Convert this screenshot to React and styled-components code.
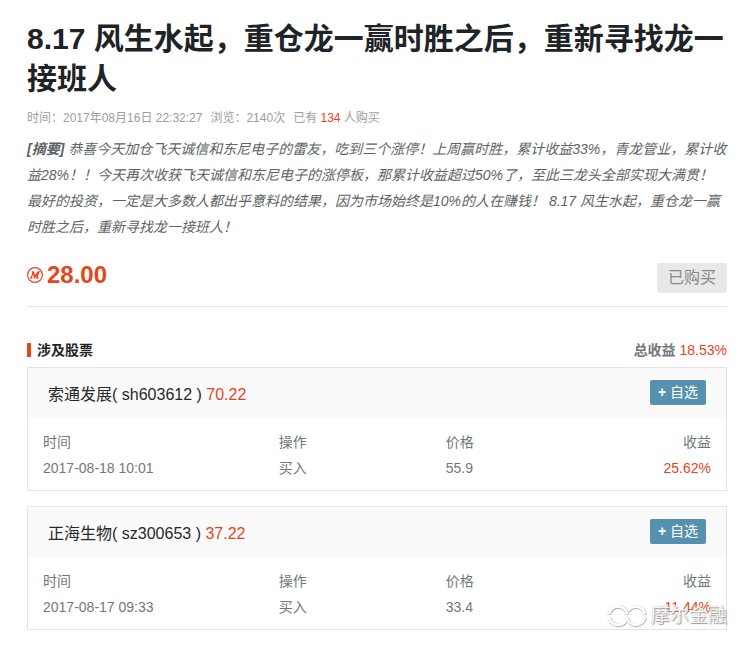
import styled, { createGlobalStyle } from "styled-components";

const GlobalStyle = createGlobalStyle`
  * {
    box-sizing: border-box;
  }

  body {
    margin: 0;
    background: #fff;
    color: #72777b;
    font-family: "Liberation Sans", "Noto Sans CJK SC", sans-serif;
    font-size: 14px;
    text-spacing-trim: space-all;
  }
`;

const Page = styled.main`
  padding: 19px 14px 15px 27px;
`;

const Title = styled.h1`
  margin: 0;
  font-size: 30px;
  line-height: 40px;
  font-weight: 700;
  color: #1d2326;
`;

const Meta = styled.div`
  display: flex;
  gap: 8px;
  margin-top: 9px;
  font-size: 12px;
  line-height: 20px;
  color: #999ea1;
`;

const BuyerCount = styled.span`
  color: #e8441c;
`;

const Summary = styled.p`
  margin: 8px 0 0;
  line-height: 26px;
  font-style: italic;
  color: #5c6366;
`;

const PriceRow = styled.div`
  display: flex;
  justify-content: space-between;
  align-items: flex-end;
  margin-top: 20px;
  padding-bottom: 13px;
  border-bottom: 1px solid #e4e4e4;
`;

const Price = styled.div`
  display: flex;
  align-items: center;
  gap: 4px;
  padding-bottom: 3px;
  font-size: 24px;
  line-height: 30px;
  font-weight: 700;
  color: #e8441c;
`;

const BoughtButton = styled.button`
  height: 30px;
  padding: 0 11px;
  border: 0;
  border-radius: 2px;
  background: #e8e8e8;
  color: #888;
  font-family: inherit;
  font-size: 16px;
  line-height: 30px;
`;

const SectionHead = styled.div`
  display: flex;
  justify-content: space-between;
  align-items: center;
  margin: 33px 0 7px;
  line-height: 20px;
`;

const SectionTitle = styled.h2`
  display: flex;
  align-items: center;
  gap: 6px;
  margin: 0;
  font-size: 14px;
  color: #1d2326;

  &::before {
    content: "";
    width: 4px;
    height: 14px;
    background: #e8441c;
  }
`;

const Up = styled.span`
  color: #e8441c;
`;

const StockList = styled.div`
  display: grid;
  gap: 15px;
  position: relative;
`;

const Card = styled.section`
  border: 1px solid #e4e4e4;
`;

const CardHead = styled.header`
  display: flex;
  justify-content: space-between;
  align-items: center;
  height: 50px;
  padding: 0 20px 1px;
  background: #fafafa;
`;

const StockName = styled.h3`
  margin: 0;
  font-size: 16px;
  font-weight: 400;
  color: #25292c;
`;

const FollowButton = styled.button`
  height: 25px;
  padding: 0 8px;
  border: 0;
  border-radius: 2px;
  background: #5692b0;
  color: #fff;
  font-family: inherit;
  font-size: 14px;
  line-height: 25px;
  cursor: pointer;
`;

const TableWrap = styled.div`
  padding: 11px 15px 9px;
`;

const Table = styled.table`
  width: 100%;
  table-layout: fixed;
  border-collapse: collapse;
  line-height: 26px;
`;

const Cell = styled.td`
  width: ${({ $width }) => $width || "auto"};
  height: 26px;
  padding: 0;
  font-weight: 400;
  text-align: ${({ $right }) => ($right ? "right" : "left")};
  color: ${({ $up }) => ($up ? "#e8441c" : "inherit")};
`;

const Watermark = styled.div`
  position: absolute;
  right: 0;
  bottom: 0;
  display: flex;
  align-items: center;
  gap: 4px;
  font-size: 19px;
  line-height: 26px;
  color: rgba(255, 255, 255, 0.9);
  text-shadow: 1px 1px 1px #999, 0 0 1px #aaa;
  pointer-events: none;
`;

const stocks = [
  {
    name: "索通发展",
    code: "sh603612",
    current: "70.22",
    time: "2017-08-18 10:01",
    action: "买入",
    price: "55.9",
    profit: "25.62%",
  },
  {
    name: "正海生物",
    code: "sz300653",
    current: "37.22",
    time: "2017-08-17 09:33",
    action: "买入",
    price: "33.4",
    profit: "11.44%",
  },
];

const CoinIcon = () => (
  <svg width="16" height="16" viewBox="0 0 16 16" fill="none" stroke="#e8441c">
    <circle cx="8" cy="8" r="7.4" strokeWidth="1.2" />
    <path d="M2.8 11h2.6M4.2 11 6.2 5M5 4.9h1.8" strokeWidth="1.1" />
    <path d="M6.4 5 7.6 10.2 11.2 5 10 11" strokeWidth="1.6" />
    <path d="M10.8 4.9h2.4M8.8 11h2.8" strokeWidth="1.1" />
  </svg>
);

const leftRing = "M1.9 12.3A9.3 9.8 0 0 1 20.2 12.3M1.9 15.2A9.3 9.8 0 0 0 19 18";
const rightRing = "M37.9 15.2A9.3 9.8 0 0 1 19.8 15.2M37.9 12.3A9.3 9.8 0 0 0 21 9";

const RingsIcon = () => (
  <svg width="40" height="28" viewBox="0 0 40 28" fill="none">
    <g stroke="#b4b4b4" strokeWidth="3.8" transform="translate(.4 .5)">
      <path d={leftRing} />
      <path d={rightRing} />
    </g>
    <g stroke="#fff" strokeWidth="2.8">
      <path d={leftRing} />
      <path d={rightRing} />
    </g>
  </svg>
);

const StockCard = ({ stock }) => (
  <Card>
    <CardHead>
      <StockName>
        {stock.name}( {stock.code} ) <Up>{stock.current}</Up>
      </StockName>
      <FollowButton type="button">
        <b>+</b> 自选
      </FollowButton>
    </CardHead>
    <TableWrap>
      <Table>
        <thead>
          <tr>
            <Cell as="th" $width="35.3%">
              时间
            </Cell>
            <Cell as="th" $width="25%">
              操作
            </Cell>
            <Cell as="th">价格</Cell>
            <Cell as="th" $right>
              收益
            </Cell>
          </tr>
        </thead>
        <tbody>
          <tr>
            <Cell>{stock.time}</Cell>
            <Cell>{stock.action}</Cell>
            <Cell>{stock.price}</Cell>
            <Cell $right $up>
              {stock.profit}
            </Cell>
          </tr>
        </tbody>
      </Table>
    </TableWrap>
  </Card>
);

const App = () => {
  return (
    <>
      <GlobalStyle />
      <Page>
        <Title>8.17 风生水起，重仓龙一赢时胜之后，重新寻找龙一接班人</Title>
        <Meta>
          <span>时间：2017年08月16日 22:32:27</span>
          <span>浏览：2140次</span>
          <span>
            已有 <BuyerCount>134</BuyerCount> 人购买
          </span>
        </Meta>
        <Summary>
          <b>[摘要]</b>{" "}
          恭喜今天加仓飞天诚信和东尼电子的雷友，吃到三个涨停！上周赢时胜，累计收益33%，青龙管业，累计收益28%！！今天再次收获飞天诚信和东尼电子的涨停板，那累计收益超过50%了，至此三龙头全部实现大满贯！
          最好的投资，一定是大多数人都出乎意料的结果，因为市场始终是10%的人在赚钱！
          8.17 风生水起，重仓龙一赢时胜之后，重新寻找龙一接班人！
        </Summary>
        <PriceRow>
          <Price>
            <CoinIcon />
            28.00
          </Price>
          <BoughtButton type="button">已购买</BoughtButton>
        </PriceRow>
        <SectionHead>
          <SectionTitle>涉及股票</SectionTitle>
          <div>
            <b>总收益</b> <Up>18.53%</Up>
          </div>
        </SectionHead>
        <StockList>
          {stocks.map((stock) => (
            <StockCard key={stock.code} stock={stock} />
          ))}
          <Watermark>
            <RingsIcon />
            摩尔金融
          </Watermark>
        </StockList>
      </Page>
    </>
  );
};

export default App;
